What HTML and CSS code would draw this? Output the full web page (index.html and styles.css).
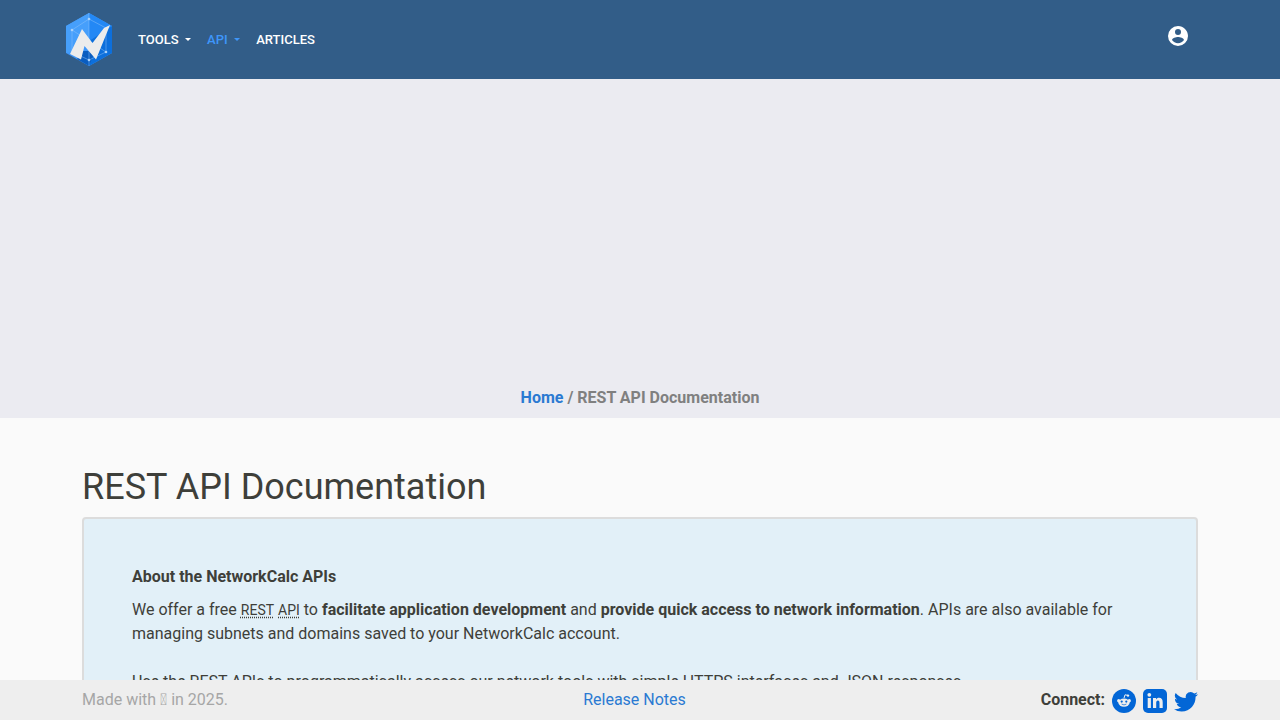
FILE: index.html
```html
<!DOCTYPE html>
<html lang="en">
<head>
    <meta charset="UTF-8">
    <meta name="viewport" content="width=device-width, initial-scale=1.0">
    <title>REST API Documentation</title>
    <link rel="stylesheet" href="styles.css">
</head>
<body>
    <header class="navbar">
        <a class="brand" href="#">
            <svg width="48" height="56" viewBox="0 0 48 56">
                <path fill="#3f97fa" d="M24 1 47 14V41L24 54 1 41V14z"/>
                <path fill="#2388f5" d="M24 1 47 14 24 29z"/>
                <path fill="#469ffb" d="M1 14 24 1V29L7 40 1 41z"/>
                <path fill="#0c6fdc" d="M24 29 47 14V41L24 54z"/>
                <path fill="#0a5dc0" d="M18 39 30 39 24 54 12 47z"/>
                <g fill="none" stroke="#91c5f8" stroke-opacity=".6" stroke-width=".8">
                    <path d="M24 7 41 16V40L24 48 7 40V18z"/>
                    <path d="M24 1V54M7 18 24 29 41 40"/>
                </g>
                <g fill="#a9d2fa">
                    <circle cx="24" cy="7" r="1.3"/>
                    <circle cx="7" cy="18" r="1.3"/>
                    <circle cx="24" cy="48" r="1.3"/>
                    <circle cx="41" cy="40" r="1.3"/>
                </g>
                <path fill="#ececec" d="M5 42 17 17 27.5 31 39 16 45 13 31 47.5 19.5 34 16 47.5z"/>
            </svg>
        </a>
        <nav class="menu">
            <a class="dropdown" href="#">TOOLS</a>
            <a class="dropdown active" href="#">API</a>
            <a href="#">ARTICLES</a>
        </nav>
        <a class="account" href="#" aria-label="Account">
            <svg width="24" height="24" viewBox="0 0 24 24" fill="#fff"><path d="M12,19.2C9.5,19.2 7.29,17.92 6,16C6.03,14 10,12.9 12,12.9C14,12.9 17.97,14 18,16C16.71,17.92 14.5,19.2 12,19.2M12,5A3,3 0 0,1 15,8A3,3 0 0,1 12,11A3,3 0 0,1 9,8A3,3 0 0,1 12,5M12,2A10,10 0 0,0 2,12A10,10 0 0,0 12,22A10,10 0 0,0 22,12C22,6.47 17.5,2 12,2Z"/></svg>
        </a>
    </header>

    <div class="banner">
        <div class="breadcrumbs"><a href="#">Home</a> / REST API Documentation</div>
    </div>

    <main class="container">
        <h1>REST API Documentation</h1>
        <section class="about">
            <h2>About the NetworkCalc APIs</h2>
            <p>We offer a free <abbr title="Representational State Transfer">REST</abbr> <abbr title="Application Programming Interface">API</abbr> to <strong>facilitate application development</strong> and <strong>provide quick access to network information</strong>. APIs are also available for managing subnets and domains saved to your NetworkCalc account.</p>
            <p>Use the REST APIs to programmatically access our network tools with simple HTTPS interfaces and JSON responses.</p>
        </section>
    </main>

    <footer class="footer">
        <div class="footer-inner">
            <span class="made">Made with &#x10fff0; in 2025.</span>
            <a class="notes" href="#">Release Notes</a>
            <div class="connect">
                <strong>Connect:</strong>
                <a href="#" aria-label="Reddit">
                    <svg width="24" height="24" viewBox="0 0 24 24">
                        <circle cx="12" cy="12" r="12" fill="#0366d6"/>
                        <path fill="none" stroke="#eee" stroke-width="1" d="M12 9 13 5.8 16 6.4"/>
                        <g fill="#eee">
                            <circle cx="16" cy="6.6" r="1.2"/>
                            <circle cx="6.7" cy="11.7" r="1.6"/>
                            <circle cx="17.3" cy="11.7" r="1.6"/>
                            <ellipse cx="12" cy="13.6" rx="5.7" ry="4.2"/>
                        </g>
                        <circle cx="9.7" cy="12.6" r="1.1" fill="#0366d6"/>
                        <circle cx="14.3" cy="12.6" r="1.1" fill="#0366d6"/>
                        <path fill="none" stroke="#0366d6" stroke-width=".7" stroke-linecap="round" d="M9.9 15.3Q12 16.8 14.1 15.3"/>
                    </svg>
                </a>
                <a href="#" aria-label="LinkedIn">
                    <svg width="24" height="24" viewBox="0 0 24 24">
                        <rect width="24" height="24" rx="5" fill="#0366d6"/>
                        <g fill="#eee">
                            <circle cx="6.3" cy="5.8" r="1.9"/>
                            <rect x="4.7" y="9" width="3.2" height="10"/>
                            <path d="M10 9h3v1.4c.6-1 1.7-1.6 3-1.6 2.6 0 3.7 1.6 3.7 4.5V19h-3.2v-5c0-1.5-.4-2.4-1.6-2.4-1.2 0-1.7.9-1.7 2.4v5H10z"/>
                        </g>
                    </svg>
                </a>
                <a href="#" aria-label="Twitter">
                    <svg width="24" height="24" viewBox="0 0 16 16" fill="#0366d6"><path d="M5.026 15c6.038 0 9.341-5.003 9.341-9.334 0-.14 0-.282-.006-.422A6.685 6.685 0 0 0 16 3.542a6.658 6.658 0 0 1-1.889.518 3.301 3.301 0 0 0 1.447-1.817 6.533 6.533 0 0 1-2.087.793A3.286 3.286 0 0 0 7.875 6.03a9.325 9.325 0 0 1-6.767-3.429 3.289 3.289 0 0 0 1.018 4.382A3.323 3.323 0 0 1 .64 6.575v.045a3.288 3.288 0 0 0 2.632 3.218 3.203 3.203 0 0 1-.865.115 3.23 3.23 0 0 1-.614-.057 3.283 3.283 0 0 0 3.067 2.277A6.588 6.588 0 0 1 .78 13.58a6.32 6.32 0 0 1-.78-.045A9.344 9.344 0 0 0 5.026 15z"/></svg>
                </a>
            </div>
        </div>
    </footer>
</body>
</html>
```
FILE: styles.css
```css
* {
    box-sizing: border-box;
}
body {
    margin: 0;
    height: 100vh;
    overflow: hidden;
    display: flex;
    flex-direction: column;
    font-family: Roboto, sans-serif;
    font-size: 16px;
    line-height: 24px;
    color: #3e3f3a;
    background-color: #fafafa;
}
a {
    color: #2a7ad2;
    text-decoration: none;
}
svg {
    display: block;
}
.navbar {
    flex: none;
    height: 79px;
    padding: 0 90px 0 65px;
    display: flex;
    align-items: center;
    background-color: #325d88;
}
.brand {
    margin-right: 25px;
    padding-top: 1px;
}
.menu {
    display: flex;
    gap: 16px;
    font-size: 13px;
    font-weight: 500;
}
.menu a {
    color: #fff;
}
.menu .active {
    color: #3e96fa;
}
.dropdown::after {
    content: "";
    display: inline-block;
    margin-left: 6.5px;
    vertical-align: 3px;
    border-top: 3px solid;
    border-left: 3px solid transparent;
    border-right: 3px solid transparent;
}
.account {
    margin-left: auto;
    padding-bottom: 7px;
}
.banner {
    flex: none;
    height: 339px;
    padding-bottom: 8px;
    display: flex;
    align-items: flex-end;
    justify-content: center;
    background-color: #ebebf1;
}
.breadcrumbs {
    font-weight: 700;
    color: #808080;
}
.container {
    flex: 1;
    min-height: 0;
    overflow: hidden;
    padding: 47px 82px 0;
}
h1 {
    margin: 0 0 8px;
    font-size: 36px;
    font-weight: 400;
    line-height: 44px;
}
.about {
    padding: 46px 48px;
    border: 2px solid #dcdcdc;
    border-radius: 4px;
    background-color: #e2f0f8;
}
.about h2 {
    margin: 0 0 9px;
    font-size: 16px;
    font-weight: 700;
    line-height: 24px;
}
.about p {
    margin: 0 0 24px;
}
abbr {
    font-size: 14px;
    line-height: 1;
    text-decoration: underline dotted;
    text-underline-offset: 2px;
}
.footer {
    flex: none;
    height: 40px;
    background-color: #eee;
}
.footer-inner {
    height: 40px;
    padding: 0 82px;
    display: grid;
    grid-template-columns: 1fr auto 1fr;
    align-items: center;
}
.made {
    color: #a6a6a6;
}
.notes {
    margin-right: 11px;
}
.connect {
    display: flex;
    align-items: center;
    justify-content: flex-end;
    gap: 7px;
}
.connect svg {
    margin-top: 2px;
}
```
